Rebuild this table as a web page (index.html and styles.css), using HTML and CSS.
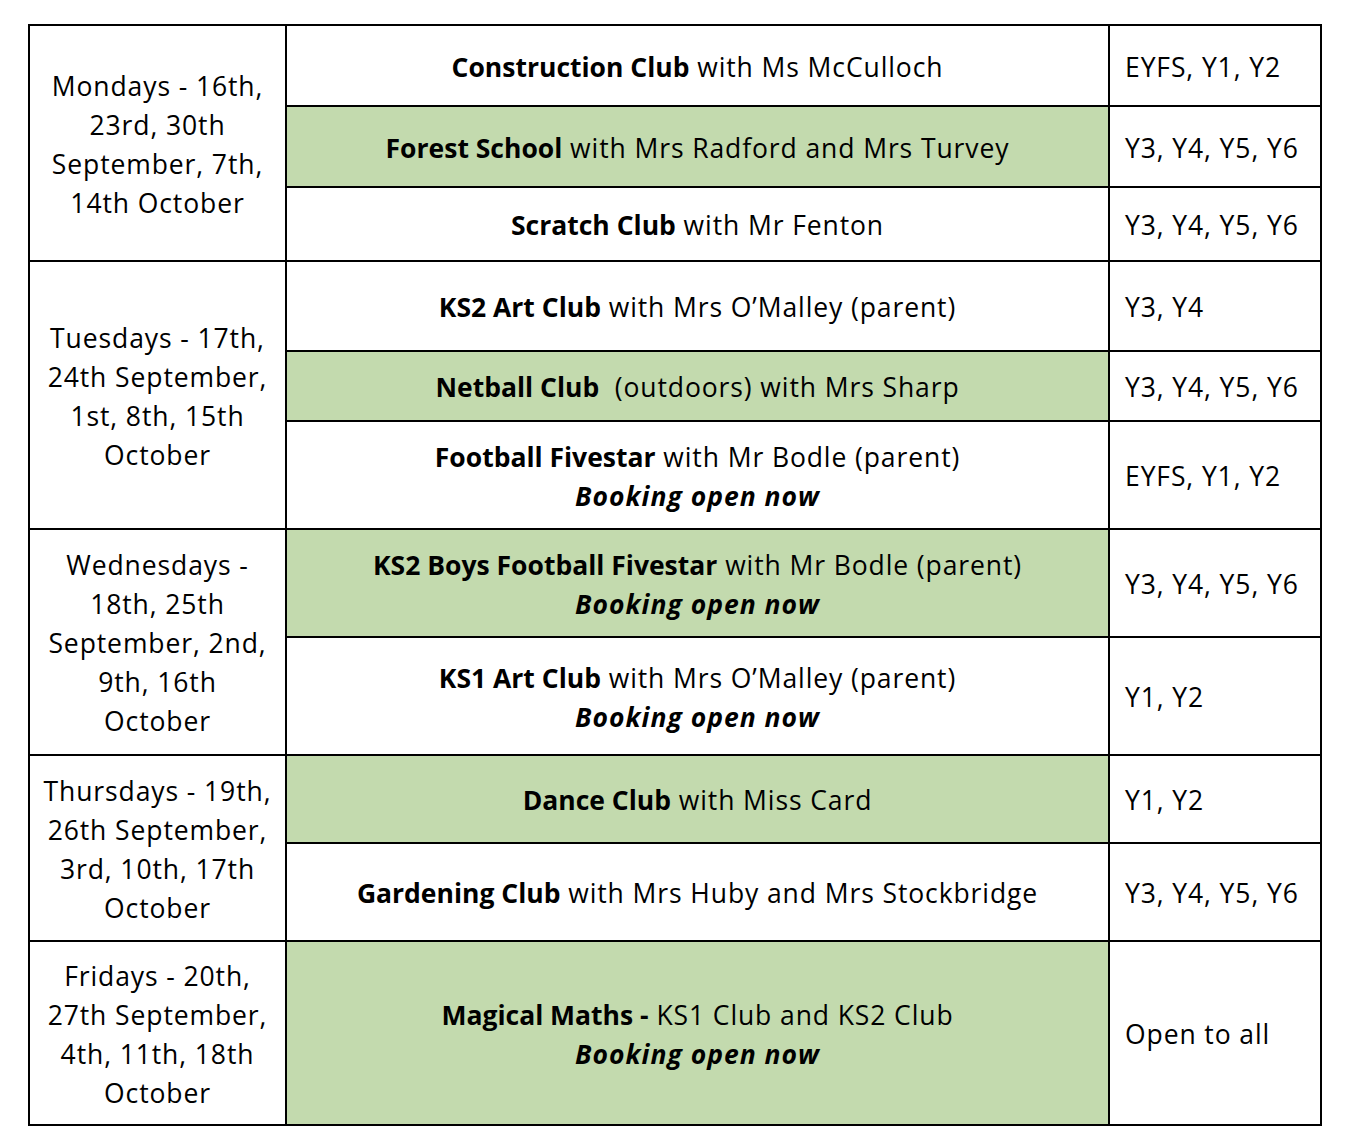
FILE: index.html
```html
<!DOCTYPE html>
<html lang="en">
<head>
<meta charset="utf-8">
<title>Clubs</title>
<link rel="stylesheet" href="styles.css">
</head>
<body>
<div class="page">
<table class="clubs">
  <colgroup>
    <col class="c-day">
    <col class="c-club">
    <col class="c-year">
  </colgroup>
  <tbody>
    <tr class="h81">
      <td class="day" rowspan="3">Mondays - 16th,<br>23rd, 30th<br>September, 7th,<br>14th October</td>
      <td class="club"><b>Construction Club</b> with Ms McCulloch</td>
      <td class="year">EYFS, Y1, Y2</td>
    </tr>
    <tr class="h81">
      <td class="club green"><b>Forest School</b> with Mrs Radford and Mrs Turvey</td>
      <td class="year">Y3, Y4, Y5, Y6</td>
    </tr>
    <tr class="h74">
      <td class="club"><b>Scratch Club</b> with Mr Fenton</td>
      <td class="year">Y3, Y4, Y5, Y6</td>
    </tr>

    <tr class="h90">
      <td class="day" rowspan="3">Tuesdays - 17th,<br>24th September,<br>1st, 8th, 15th<br>October</td>
      <td class="club"><b>KS2 Art Club</b> with Mrs O’Malley (parent)</td>
      <td class="year">Y3, Y4</td>
    </tr>
    <tr class="h70">
      <td class="club green"><b>Netball Club</b>&nbsp; (outdoors) with Mrs Sharp</td>
      <td class="year">Y3, Y4, Y5, Y6</td>
    </tr>
    <tr class="h108">
      <td class="club"><b>Football Fivestar</b> with Mr Bodle (parent)<br><b class="bi">Booking open now</b></td>
      <td class="year">EYFS, Y1, Y2</td>
    </tr>

    <tr class="h108">
      <td class="day" rowspan="2">Wednesdays -<br>18th, 25th<br>September, 2nd,<br>9th, 16th<br>October</td>
      <td class="club green"><b>KS2 Boys Football Fivestar</b> with Mr Bodle (parent)<br><b class="bi">Booking open now</b></td>
      <td class="year">Y3, Y4, Y5, Y6</td>
    </tr>
    <tr class="h118">
      <td class="club"><b>KS1 Art Club</b> with Mrs O’Malley (parent)<br><b class="bi">Booking open now</b></td>
      <td class="year">Y1, Y2</td>
    </tr>

    <tr class="h88">
      <td class="day" rowspan="2">Thursdays - 19th,<br>26th September,<br>3rd, 10th, 17th<br>October</td>
      <td class="club green"><b>Dance Club</b> with Miss Card</td>
      <td class="year">Y1, Y2</td>
    </tr>
    <tr class="h98">
      <td class="club"><b>Gardening Club</b> with Mrs Huby and Mrs Stockbridge</td>
      <td class="year">Y3, Y4, Y5, Y6</td>
    </tr>

    <tr class="h184">
      <td class="day">Fridays - 20th,<br>27th September,<br>4th, 11th, 18th<br>October</td>
      <td class="club green"><b>Magical Maths -</b> KS1 Club and KS2 Club<br><b class="bi">Booking open now</b></td>
      <td class="year">Open to all</td>
    </tr>
  </tbody>
</table>
</div>
</body>
</html>
```

FILE: styles.css
```css
html, body {
  margin: 0;
  padding: 0;
  background: #ffffff;
}

.page {
  padding: 24px 0 0 28px;
}

.clubs {
  border-collapse: collapse;
  table-layout: fixed;
  width: 1292px;
  font-family: "Open Sans", Lato, "Liberation Sans", sans-serif;
  font-size: 26.5px;
  line-height: 39px;
  letter-spacing: 0.9px;
  color: #000;
}

.c-day { width: 257px; }
.c-club { width: 823px; }
.c-year { width: 212px; }

.clubs td {
  border: 2px solid #000;
  padding: 0;
  vertical-align: middle;
}

.clubs b {
  font-weight: 700;
  letter-spacing: 0;
}

.clubs .bi {
  font-style: italic;
  letter-spacing: 1px;
}

.day {
  text-align: center;
  padding-top: 3px !important;
}

.club {
  text-align: center;
  padding-top: 3px !important;
}

.year {
  text-align: left;
  padding: 3px 0 0 15px !important;
}

.green {
  background: #c3daae;
}

.h70 { height: 70px; }
.h74 { height: 74px; }
.h81 { height: 81px; }
.h88 { height: 88px; }
.h90 { height: 90px; }
.h98 { height: 98px; }
.h108 { height: 108px; }
.h118 { height: 118px; }
.h184 { height: 184px; }
```
